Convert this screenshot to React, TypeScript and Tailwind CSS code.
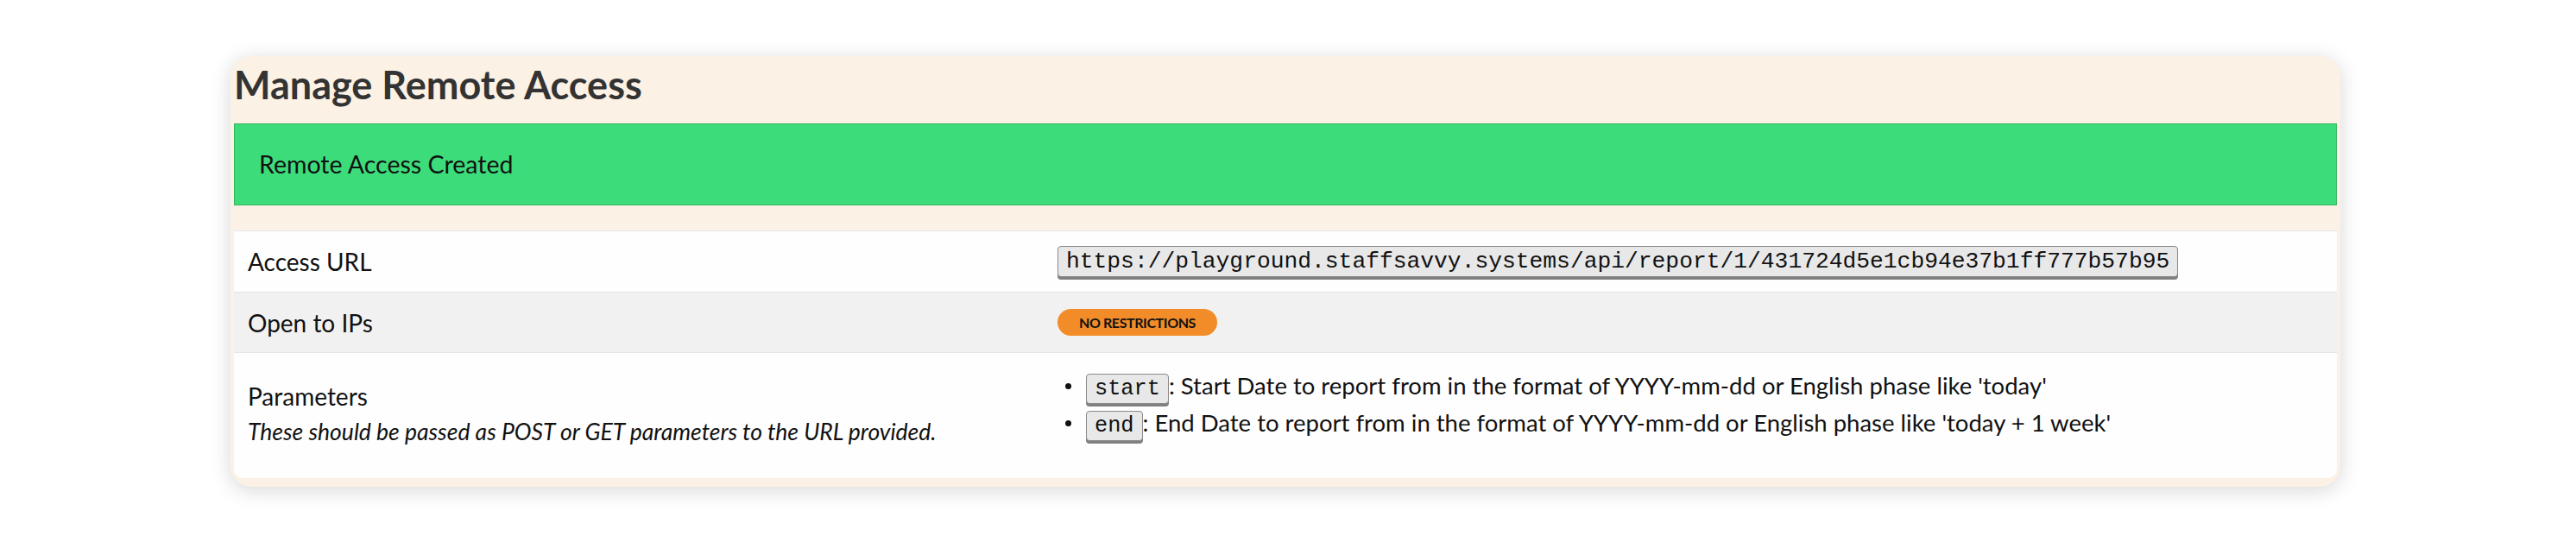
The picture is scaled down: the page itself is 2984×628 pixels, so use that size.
const ACCESS_URL =
  "https://playground.staffsavvy.systems/api/report/1/431724d5e1cb94e37b1ff777b57b95";

const params = [
  {
    name: "start",
    text: ": Start Date to report from in the format of YYYY-mm-dd or English phase like 'today'",
  },
  {
    name: "end",
    text: ": End Date to report from in the format of YYYY-mm-dd or English phase like 'today + 1 week'",
  },
];

function Kbd({ children, size }: { children: string; size: string }) {
  return (
    <code
      className={`inline-block rounded-[4px] border border-[#8a8a8a] bg-[#e8e8e8] px-[9px] py-[2px] leading-[1.15] text-[#111] shadow-[0_3px_0_#808080] font-['Liberation_Mono',monospace] ${size}`}
    >
      {children}
    </code>
  );
}

export default function App() {
  return (
    <div className="min-h-screen bg-white pl-[267px] pt-[65px] font-['Lato',sans-serif]">
      <div className="w-[2444px] rounded-[24px] bg-[#fbf1e4] px-1 pt-[6px] pb-[10px] shadow-[0_4px_24px_rgba(0,0,0,0.16)]">
        <h1 className="text-[45px] font-bold leading-[1.2] text-[#333]">Manage Remote Access</h1>

        {/* success alert */}
        <div className="mt-[18px] flex h-[95px] items-center border border-[#34b35f] bg-[#3ddc7b] px-[28px] text-[28.5px] text-[#111]">
          Remote Access Created
        </div>

        {/* details table */}
        <div className="mt-[29px] grid grid-cols-[938px_1fr] overflow-hidden rounded-b-[10px] border-t border-[#e4e4ec] text-[#111]">
          <div className="flex h-[70px] items-center bg-[#fefefe] px-4 text-[28px]">Access URL</div>
          <div className="flex h-[70px] items-center bg-[#fefefe] px-4">
            <Kbd size="text-[26.3px]">{ACCESS_URL}</Kbd>
          </div>

          <div className="flex h-[71px] items-center border-y border-[#e4e4ec] bg-[#f1f1f1] px-4 text-[28px]">
            Open to IPs
          </div>
          <div className="flex h-[71px] items-center border-y border-[#e4e4ec] bg-[#f1f1f1] px-4">
            <span className="rounded-full bg-[#f28c28] px-[25px] py-[6px] text-[16px] font-bold leading-[19px] tracking-tight text-[#111]">
              NO RESTRICTIONS
            </span>
          </div>

          <div className="flex h-[145px] flex-col justify-center bg-[#fefefe] px-4 pb-[4px]">
            <div className="text-[28px] leading-[40px]">Parameters</div>
            <div className="text-[26.5px] italic leading-[42px]">
              These should be passed as POST or GET parameters to the URL provided.
            </div>
          </div>
          <div className="h-[145px] bg-[#fefefe] px-4 pt-[17px]">
            <ul>
              {params.map((p) => (
                <li key={p.name} className="flex h-[43px] items-baseline text-[27.5px]">
                  <span className="ml-[9px] mr-[17px] h-[7px] w-[7px] shrink-0 self-center rounded-full bg-[#111]" />
                  <Kbd size="text-[25.3px]">{p.name}</Kbd>
                  <span className="whitespace-nowrap">{p.text}</span>
                </li>
              ))}
            </ul>
          </div>
        </div>
      </div>
    </div>
  );
}
